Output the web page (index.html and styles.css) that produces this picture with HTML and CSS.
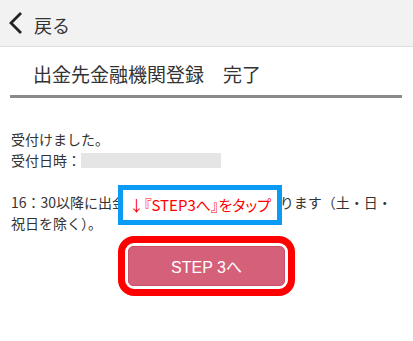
FILE: index.html
```html
<!DOCTYPE html>
<html lang="ja">
<head>
<meta charset="utf-8">
<link rel="stylesheet" href="styles.css">
</head>
<body>
<header class="header">
  <svg class="chev" width="16" height="24" viewBox="0 0 16 24"><polyline points="13,2 3,12 13,22" fill="none" stroke="#222" stroke-width="2.8" stroke-linejoin="miter"/></svg>
  <span class="back">戻る</span>
</header>
<h1 class="title">出金先金融機関登録　完了</h1>
<main class="content">
  <p class="para">受付けました。<br>受付日時：<span class="masked"></span></p>
  <div class="para notice">
    16：30以降に出金先の登録は翌営業日となります（土・日・<br>祝日を除く）。
    <div class="callout">↓『STEP3へ』をタップ</div>
  </div>
  <div class="btn-row">
    <div class="highlight"><button class="step-btn">STEP 3へ</button></div>
  </div>
</main>
</body>
</html>
```
FILE: styles.css
```css
html, body {
  margin: 0;
  padding: 0;
  background: #fff;
}
body {
  font-family: "Noto Sans CJK JP", "Noto Sans", sans-serif;
  color: #333;
  width: 413px;
  height: 341px;
  overflow: hidden;
}
.header {
  height: 46px;
  background: #f2f2f2;
  border-bottom: 1px solid #dedede;
  display: flex;
  align-items: center;
  padding-left: 8px;
}
.chev {
  display: block;
}
.back {
  font-size: 18px;
  margin-left: 10px;
  margin-top: 3px;
  color: #333;
}
.title {
  margin: 0 11px 0 10px;
  padding: 13px 0 8px 23px;
  font-size: 19px;
  font-weight: normal;
  line-height: 27px;
  color: #333;
  border-bottom: 3px solid #8a8a8a;
}
.content {
  padding: 0 11px;
}
.para {
  margin: 0;
  font-size: 14px;
  line-height: 21px;
}
.para:first-child {
  margin-top: 31px;
}
.masked {
  display: inline-block;
  width: 140px;
  height: 15px;
  background: #e5e5e5;
  vertical-align: -2px;
}
.notice {
  position: relative;
  margin-top: 21px;
}
.callout {
  position: absolute;
  left: 107px;
  top: -7px;
  width: 154px;
  height: 30px;
  border: 5px solid #0a9bf5;
  background: #fff;
  color: #ff0000;
  font-size: 15px;
  line-height: 30px;
  text-align: center;
  font-feature-settings: "palt";
}
.btn-row {
  display: flex;
  justify-content: center;
  margin-top: 2px;
}
.highlight {
  border: 7px solid #ff0000;
  border-radius: 16px;
  padding: 3px;
  background: #fff;
}
.step-btn {
  display: block;
  width: 157px;
  height: 40px;
  border: 1px solid #c8506b;
  border-radius: 5px;
  background: #d5607a;
  color: #fff;
  font-family: "Liberation Sans", "Noto Sans CJK JP", sans-serif;
  font-size: 16px;
  padding: 0;
}
```
